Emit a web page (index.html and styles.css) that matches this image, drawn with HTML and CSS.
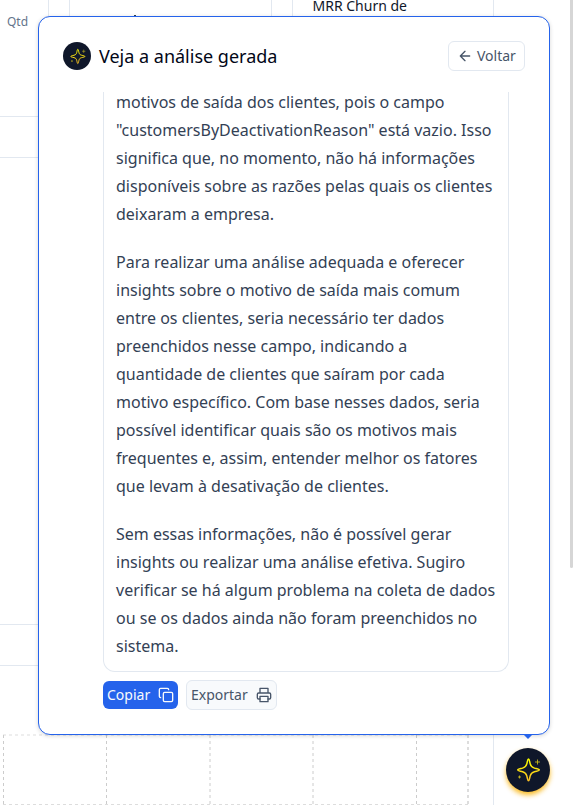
FILE: index.html
```html
<!DOCTYPE html>
<html lang="pt-BR">
<head>
<meta charset="utf-8">
<title>Análise</title>
<link rel="stylesheet" href="styles.css">
</head>
<body>
<svg class="defs" width="0" height="0">
  <defs>
    <linearGradient id="gold" x1="0" y1="0" x2="0" y2="1"><stop offset="0" stop-color="#faff00"/><stop offset="1" stop-color="#fbbf24"/></linearGradient>
    <symbol id="sparkle" viewBox="0 0 26 26">
      <path d="M13.500 2c.9 0 1 2.400 1.700 4.900.7 2.600 1.600 3.500 4.200 4.200 2.500.7 4.900 1 4.900 1.900s-2.400 1-4.900 1.700c-2.600.7-3.500 1.600-4.200 4.200-.7 2.500-.8 4.900-1.700 4.900s-1-2.400-1.700-4.900c-.7-2.600-1.600-3.500-4.200-4.200-2.500-.7-4.900-.8-4.900-1.700s2.400-1.200 4.900-1.900c2.600-.7 3.500-1.600 4.200-4.200.7-2.500.8-4.900 1.700-4.900z" fill="none" stroke="url(#gold)" stroke-width="1.500"/>
      <path d="M22.500 2.500v5M20 5h5M4.500 18.500v3M3 20h3" fill="none" stroke="#d4c51b" stroke-width=".8"/>
    </symbol>
  </defs>
</svg>
<main class="page">
  <section class="stats">
    <div class="stat stat-first"><span class="qty">Qtd</span></div>
    <div class="stat"><span class="tick"></span></div>
    <div class="stat"><span class="label">MRR Churn de</span></div>
  </section>
  <section class="block"></section>
  <section class="chart">
    <svg width="470" height="72" fill="none" stroke="#ccc" stroke-dasharray="3 3">
      <path d="M3 1H468M3 70.500H468" stroke="#ddd"/>
      <path d="M3.500 1v70M106.500 1v70M210 1v70M313 1v70M416.500 1v70"/>
      <path d="M468 1v70" stroke="#ddd" stroke-width="2"/>
    </svg>
  </section>
</main>
<div class="scrollbar"></div>

<div class="popup">
  <header class="head">
    <span class="badge"><svg width="17" height="17"><use href="#sparkle"/></svg></span>
    <h1>Veja a análise gerada</h1>
    <button class="btn back">
      <svg class="ico" width="16" height="16" viewBox="0 0 24 24"><path d="M19 12H5M12 19l-7-7 7-7"/></svg>Voltar
    </button>
  </header>
  <div class="viewport">
    <article class="answer">
      <p>motivos de saída dos clientes, pois o campo<br>"customersByDeactivationReason" está vazio. Isso<br>significa que, no momento, não há informações<br>disponíveis sobre as razões pelas quais os clientes<br>deixaram a empresa.</p>
      <p>Para realizar uma análise adequada e oferecer<br>insights sobre o motivo de saída mais comum<br>entre os clientes, seria necessário ter dados<br>preenchidos nesse campo, indicando a<br>quantidade de clientes que saíram por cada<br>motivo específico. Com base nesses dados, seria<br>possível identificar quais são os motivos mais<br>frequentes e, assim, entender melhor os fatores<br>que levam à desativação de clientes.</p>
      <p>Sem essas informações, não é possível gerar<br>insights ou realizar uma análise efetiva. Sugiro<br>verificar se há algum problema na coleta de dados<br>ou se os dados ainda não foram preenchidos no<br>sistema.</p>
    </article>
  </div>
  <footer class="actions">
    <button class="btn copy">Copiar
      <svg class="ico" width="16" height="16" viewBox="0 0 24 24"><rect x="8" y="8" width="14" height="14" rx="2"/><path d="M4 16c-1.100 0-2-.9-2-2V4c0-1.100.9-2 2-2h10c1.100 0 2 .9 2 2"/></svg>
    </button>
    <button class="btn export">Exportar
      <svg class="ico" width="16" height="16" viewBox="0 0 24 24"><path d="M6 9V2h12v7M6 18H4a2 2 0 0 1-2-2v-5a2 2 0 0 1 2-2h16a2 2 0 0 1 2 2v5a2 2 0 0 1-2 2h-2"/><rect x="6" y="14" width="12" height="8"/></svg>
    </button>
  </footer>
  <span class="arrow"></span>
</div>
<button class="fab"><svg width="26" height="26"><use href="#sparkle"/></svg></button>
</body>
</html>
```

FILE: styles.css
```css
* { box-sizing: border-box; }
body {
  margin: 0;
  height: 805px;
  overflow: hidden;
  position: relative;
  background: #fff;
  font-family: "Noto Sans", sans-serif;
}
.defs { position: absolute; }
h1, p { margin: 0; }
.page { width: 494px; }
.stats {
  display: grid;
  grid-template-columns: 49px 203px 202px;
  gap: 20px;
  height: 117px;
}
.stat {
  border: 1px solid #e2e8f0;
  border-top: 0;
  border-radius: 0 0 12px 12px;
  padding-left: 19.5px;
}
.stat-first {
  border-left: 0;
  border-radius: 0 0 12px 0;
  padding: 14px 0 0 7px;
}
.qty { font-size: 12px; line-height: 16px; color: #64748b; display: block; }
.label { display: block; margin-top: -4px; font-size: 14px; line-height: 20px; color: #0f172a; }
.tick { display: block; width: 2px; height: 1px; margin: 15px 0 0 44.5px; background: #334155; }
.block {
  height: 468px;
  margin-top: 40px;
  border: 1px solid #e2e8f0;
  border-left: 0;
}
.chart {
  height: 140px;
  margin-top: 40px;
  padding-top: 68px;
  border: solid #e2e8f0;
  border-width: 1px 1px 0 0;
}
.chart svg { display: block; }
.scrollbar {
  position: absolute;
  top: -4px;
  right: 1px;
  width: 3px;
  height: 572px;
  border-radius: 2px;
  background: #d6d6d6;
}
.popup {
  position: absolute;
  left: 38px;
  top: 16px;
  width: 512px;
  height: 719px;
  padding: 24px;
  border: 1px solid #2563eb;
  border-radius: 12px;
  background: #fff;
  box-shadow: 0 1px 4px rgba(0, 0, 0, .16);
}
.head { display: flex; align-items: center; height: 30px; }
.badge {
  display: grid;
  place-items: center;
  width: 28px;
  height: 28px;
  margin-right: 8px;
  border-radius: 50%;
  background: #0f172a;
}
h1 { font-size: 18px; font-weight: 400; line-height: 28px; color: #020617; }
.btn {
  display: flex;
  align-items: center;
  height: 30px;
  border: 1px solid #e2e8f0;
  border-radius: 6px;
  font: 14px/20px "Noto Sans", sans-serif;
  color: #475569;
  white-space: nowrap;
}
.back { width: 77px; margin-left: auto; padding: 0 8px; gap: 4px; background: #fff; }
.ico {
  fill: none;
  stroke: currentColor;
  stroke-width: 2;
  stroke-linecap: round;
  stroke-linejoin: round;
  flex: none;
}
.viewport { height: 580px; margin: 21px 0 0 40px; overflow: hidden; }
.answer {
  width: 406px;
  height: 580px;
  padding: 0 0 0 12px;
  border: 1px solid #e2e8f0;
  border-top: 0;
  border-radius: 0 0 12px 12px;
  font-size: 16px;
  line-height: 28px;
  color: #334155;
  white-space: nowrap;
}
.answer p { position: relative; top: -4px; margin-bottom: 20px; }
.actions { display: flex; align-items: center; gap: 8px; margin: 8px 0 0 40px; }
.copy { width: 75px; height: 28px; padding: 0 4px; border: 0; justify-content: space-between; background: #2563eb; color: #f8fafc; }
.export { width: 91px; padding: 0 4px; justify-content: space-between; background: #f8fafc; }
.arrow {
  position: absolute;
  left: 484px;
  top: 717px;
  border: solid transparent;
  border-width: 5px 5px 0;
  border-top-color: #2563eb;
}
.fab {
  position: absolute;
  left: 506px;
  top: 748px;
  display: grid;
  place-items: center;
  width: 44px;
  height: 44px;
  padding: 0;
  border: 0;
  border-radius: 50%;
  background: #0f172a;
  box-shadow: 0 3px 5px rgba(250, 180, 10, .9);
}
```
